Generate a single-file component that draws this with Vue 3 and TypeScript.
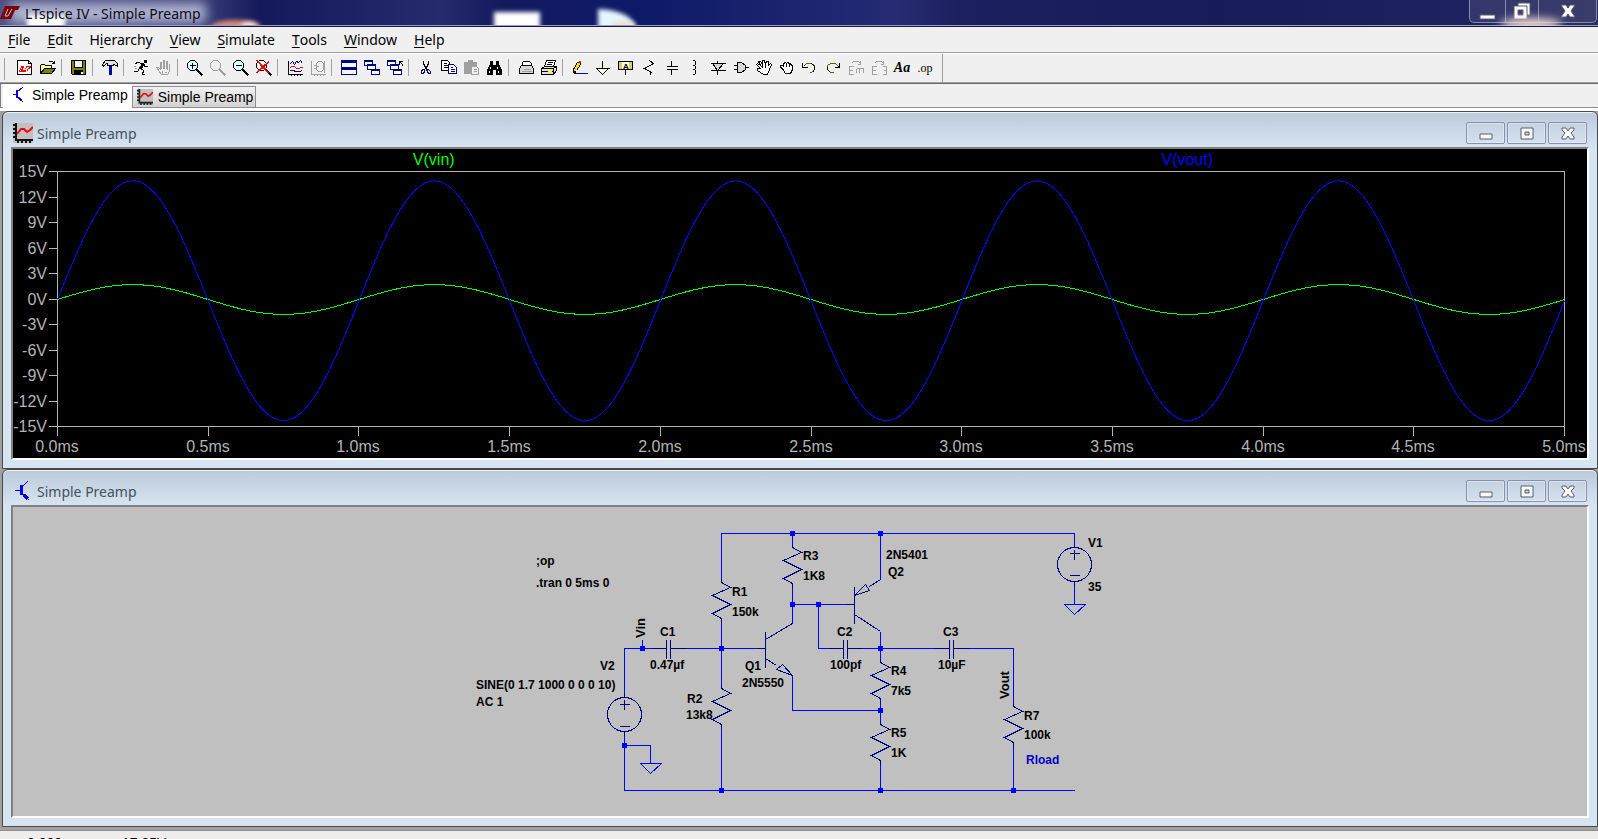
<script setup lang="ts">
import { computed, onBeforeUnmount, onMounted, ref } from 'vue'

interface Part { d: string; fill?: string; stroke?: string; w?: number }
interface Tool { name: string; parts?: Part[]; label?: string; kind?: string }

const NAVY = '#000080'
const GREY = '#a0a0a0'

const menus = ['File', 'Edit', 'Hierarchy', 'View', 'Simulate', 'Tools', 'Window', 'Help'].map((name) => {
  const at = name === 'Hierarchy' ? 1 : 0
  return { name, before: name.slice(0, at), key: name[at], after: name.slice(at + 1) }
})

function lens(stroke: string, fill: string, handle = stroke): Part[] {
  return [
    { d: 'M3 0H7L10 3V7L7 10H3L0 7V3Z', fill, stroke },
    { d: 'M9 9L15 15', stroke: handle, w: 2 },
  ]
}

function miniWindow(x: number, y: number): Part[] {
  return [
    { d: `M${x} ${y}h8v5h-8Z`, fill: '#fff', stroke: NAVY },
    { d: `M${x} ${y + 1}h8`, stroke: NAVY },
  ]
}

const groups: Tool[][] = [
  [
    {
      name: 'New Schematic',
      parts: [
        { d: 'M0 0H11L14 3V14H0Z', fill: '#fff' },
        { d: 'M11 0V3H14' },
        { d: 'M4 6H6L4 10H8V11H2ZM8 6H13L12 8H11L9 11M10 6L7 9', stroke: '#f00' },
      ],
    },
    {
      name: 'Open',
      parts: [
        { d: 'M0 13V5L1 4H4L5 5H11V8H4Z', fill: '#ffff90' },
        { d: 'M0 13L4 8H15L11 13Z', fill: '#808000' },
        { d: 'M8 2L9 1H12L14 3M14 0V3H11' },
      ],
    },
  ],
  [
    {
      name: 'Save',
      parts: [
        { d: 'M0 0H14V14H1L0 13Z', fill: '#808000' },
        { d: 'M3 0H11V7H3Z', fill: '#efefef' },
        { d: 'M3 10H11V14H3Z', fill: '#000' },
        { d: 'M10 11V13', stroke: '#fff', w: 2 },
      ],
    },
  ],
  [
    {
      name: 'Control Panel',
      parts: [
        { d: 'M7 5H9V14H7Z', fill: '#0000d0', stroke: '#0000a0' },
        { d: 'M0 4L3 0H12L15 3V6L12 4H11V5H5V3H4L1 6Z', fill: '#e0e0e0' },
      ],
    },
  ],
  [
    {
      name: 'Run',
      parts: [
        { d: 'M11 0H13V2H11Z', fill: '#000' },
        { d: 'M10 3L7 8', w: 3 },
        { d: 'M9 4L6 2H3L2 4M10 5L12 6H14M7 8L10 10L9 14H11M6 8L4 11H0' },
        { d: 'M1 8H3M0 6H2', stroke: GREY },
      ],
    },
    {
      name: 'Halt',
      parts: [{ d: 'M4 9V2H5V8M7 8V0H8V8M10 8V1H11V9M13 11V4H12M4 9L2 7H0L5 14H11L13 11M6 14V10M8 12H10', stroke: GREY }],
    },
  ],
  [
    { name: 'Zoom to rectangle', parts: [...lens('#000', '#d8ffff'), { d: 'M5 2V8M2 5H8', w: 1 }] },
    { name: 'Pan', parts: lens(GREY, '#efefef') },
    { name: 'Zoom back', parts: [...lens('#000', '#d8ffff'), { d: 'M2 5H8' }] },
    {
      name: 'Zoom full extents',
      parts: [...lens('#000', '#d8ffff'), { d: 'M0 0L12 13M1 0L13 13M13 0L0 12M13 1L1 12', stroke: '#f00' }],
    },
  ],
  [
    {
      name: 'Autorange',
      parts: [
        { d: 'M1 0V14H15M0 2H1M0 5H1M0 8H1M0 11H1M4 14V15M7 14V15M10 14V15M13 14V15' },
        { d: 'M2 4L5 1L7 4L9 1L11 2L13 0L15 3M2 10H6L8 11H12L15 10', stroke: NAVY },
        { d: 'M2 8L4 6H7L9 8H12L13 7H15', stroke: '#f00' },
      ],
    },
    {
      name: 'Plot settings',
      parts: [{ d: 'M1 0V14H15M0 2H1M0 5H1M0 8H1M4 14V15M7 14V15M10 14V15M13 14V15M3 5H5M3 8H5M8 1H11L13 3V9L11 11H8L6 9V3ZM14 0V12M6 6H8', stroke: GREY }],
    },
  ],
  [
    {
      name: 'Tile windows',
      parts: [
        { d: 'M0 0H15V7H0ZM0 7H15V14H0Z', fill: '#f4f4ff', stroke: NAVY },
        { d: 'M0 1H15M0 8H15', stroke: NAVY, w: 2 },
      ],
    },
    { name: 'Cascade windows', parts: [...miniWindow(0, 0), ...miniWindow(3, 4), ...miniWindow(7, 9)] },
    {
      name: 'Close all',
      parts: [...miniWindow(0, 0), ...miniWindow(3, 4), ...miniWindow(6, 9), { d: 'M15 5V4L12 1M12 4V1H15' }],
    },
  ],
  [
    {
      name: 'Cut',
      parts: [
        { d: 'M5 0V3L8 9M10 0V3L7 9' },
        { d: 'M6 9L4 9L3 11V13H5L6 11ZM8 9L10 9L12 11V13H10L9 11Z', stroke: NAVY },
      ],
    },
    {
      name: 'Copy',
      parts: [
        { d: 'M0 0H6L8 2V10H0ZM2 3H5M2 5H6M2 7H6', fill: '#fff' },
        { d: 'M7 4H12L15 7V13H7ZM9 7H11M9 9H13M9 11H13', fill: '#fff', stroke: NAVY },
      ],
    },
    {
      name: 'Paste',
      parts: [
        { d: 'M0 2H4V0H8V2H12V13H0Z', fill: GREY, stroke: GREY },
        { d: 'M7 6H12L14 8V14H7ZM9 9H12M9 11H12', fill: '#efefef', stroke: GREY },
      ],
    },
    {
      name: 'Find',
      parts: [
        { d: 'M3 1H5V4L6 5H8L9 4V1H11V4L13 8L14 10V14H9V9H5V14H0V10L1 8L3 4Z', fill: '#000' },
        { d: 'M3 6V8M2 10V12M10 6V8M11 10V12', stroke: '#fff' },
      ],
    },
  ],
  [
    {
      name: 'Print setup',
      parts: [
        { d: 'M4 5V2L5 1H11L13 3V5', fill: '#fff' },
        { d: 'M3 5H13L15 8V13H1V8Z', fill: '#d8d8d8' },
        { d: 'M3 11H13M5 9H12', stroke: GREY },
      ],
    },
    {
      name: 'Print',
      parts: [
        { d: 'M3 6L5 0H14L12 6', fill: '#fff' },
        { d: 'M6 2H11M5 4H10' },
        { d: 'M0 8L3 6H15V10L12 14H0Z', fill: '#e0e0e0' },
        { d: 'M0 8H12V14M0 11H12M12 8L15 6' },
        { d: 'M6 10H10', stroke: '#ff0', w: 2 },
      ],
    },
  ],
  [
    {
      name: 'Wire',
      parts: [
        { d: 'M1 13H15', stroke: '#0000ff' },
        { d: 'M1 12V9L5 2H8V4L4 10Z', fill: '#ffe000' },
        { d: 'M6 1H8', stroke: '#f00', w: 2 },
        { d: 'M1 10V12H3' },
      ],
    },
    { name: 'Ground', parts: [{ d: 'M7 0V8' }, { d: 'M1 8H13L7 14Z', fill: '#ffffd0', stroke: '#808000' }, { d: 'M0 8H14M2 9L7 14L12 9' }] },
    {
      name: 'Label net',
      kind: 'netlabel',
      parts: [{ d: 'M0 1H14V9H0Z', fill: '#d8d060' }, { d: 'M4 2H10V8H4Z', fill: '#fff', stroke: '#fff' }, { d: 'M0 1H14V9H0ZM7 9V14' }],
    },
    { name: 'Resistor', parts: [{ d: 'M8 0L12 3L3 8L10 12L8 15' }] },
    { name: 'Capacitor', parts: [{ d: 'M7 0V6M7 9V14M2 6H13M2 9H13' }] },
    { name: 'Inductor', parts: [{ d: 'M5 0H7L8 1V4L7 5H5M7 5L8 6V8L7 9H5M7 9L8 10V13L7 14H5' }] },
    { name: 'Diode', parts: [{ d: 'M7 0V3M7 10V14M0 3H15M0 10H15' }, { d: 'M2 3H13L7 10Z', fill: '#d8d8d8' }] },
    { name: 'Component', parts: [{ d: 'M4 2H8L12 5V9L8 12H4Z', fill: '#d8d8d8' }, { d: 'M0 5H4M0 9H4M12 7H15' }] },
    {
      name: 'Move',
      parts: [
        { d: 'M4 8L0 4L1 3L4 5L2 1H4L6 4V0H8L9 4L10 1H12V5L14 3L15 4L13 9L11 14H7L1 10V8Z', fill: '#fff' },
        { d: 'M6 4V7M9 4V7' },
      ],
    },
    {
      name: 'Drag',
      parts: [
        { d: 'M3 8L1 7V5H3L4 6V3L6 2L7 3L8 2L10 3L12 4L13 6V9L11 13H6L4 10Z', fill: '#fff' },
        { d: 'M7 3V6M10 3V6' },
      ],
    },
    { name: 'Undo', parts: [{ d: 'M1 6L4 3H9L12 5V9L9 12H7', stroke: '#606000' }, { d: 'M0 2V7H5M1 5H2M9 3L12 6V9L10 12' }] },
    { name: 'Redo', parts: [{ d: 'M13 6L10 3H5L2 5V9L5 12H8', stroke: '#606000' }, { d: 'M14 2V7H9M12 6H13M2 9V6M3 10L5 12' }] },
    {
      name: 'Rotate',
      parts: [
        { d: 'M5 6H1V14H5M1 10H4M8 8H15M8 8V12M11 8V12M15 8V12', stroke: GREY },
        { d: 'M3 3L5 1H10L12 3M12 0V4H9', stroke: GREY },
      ],
    },
    {
      name: 'Mirror',
      parts: [
        { d: 'M5 6H1V14H5M1 10H4M11 6H15V14H11M15 10H12', stroke: GREY },
        { d: 'M3 3L5 1H10L12 3M12 0V4H9', stroke: GREY },
      ],
    },
    { name: 'Text', label: 'Aa', kind: 'serif-bold' },
    { name: 'SPICE directive', label: '.op', kind: 'serif' },
  ],
]

/* Waveform plot */
const plotHost = ref<HTMLElement | null>(null)
const plotWidth = ref(1574)
const left = 44
const top = 22
const bottom = 277
const middle = 150
const right = computed(() => plotWidth.value - 23)
const span = computed(() => right.value - left)

const yTicks = Array.from({ length: 11 }, (_, i) => ({
  label: `${15 - 3 * i}V`,
  y: Math.round(top + ((bottom - top) * i) / 10),
}))
const xTicks = computed(() =>
  Array.from({ length: 11 }, (_, i) => ({
    label: `${(i / 2).toFixed(1)}ms`,
    x: Math.round(left + (span.value * i) / 10),
  })),
)

function trace(volts: (ms: number) => number): string {
  const points: string[] = []
  const count = 500
  for (let i = 0; i <= count; i++) {
    const ms = (5 * i) / count
    const x = left + (span.value * ms) / 5
    const y = middle - (volts(ms) * (bottom - top)) / 30
    points.push(`${x.toFixed(1)},${y.toFixed(1)}`)
  }
  return points.join(' ')
}
const vin = computed(() => trace((t) => 1.75 * Math.sin(2 * Math.PI * t)))
const vout = computed(() => trace((t) => 14.1 * Math.sin(2 * Math.PI * t) - 0.15 * (1 - Math.exp(-t * 8))))

let observer: ResizeObserver | undefined
onMounted(() => {
  const host = plotHost.value
  if (!host) return
  observer = new ResizeObserver(() => { plotWidth.value = host.clientWidth })
  observer.observe(host)
})
onBeforeUnmount(() => observer?.disconnect())

/* Schematic */
const wires = [
  'M708 72V26H1061V36', 'M708 115V177', 'M708 221V283', 'M779 26V36', 'M779 80V116', 'M867 26V72',
  'M779 97H833', 'M805 97V141H815', 'M849 141H921', 'M955 141H1000V195', 'M1000 238V283',
  'M867 124V151', 'M867 195V213', 'M867 257V283', 'M779 168V203H867', 'M673 141H744',
  'M611 186V141H638', 'M629 141V132', 'M611 228V283H1061', 'M611 238H637V256', 'M1061 78V97',
  'M627 256H648L637 266Z', 'M1051 97H1072L1061 107Z',
].join('')

const resistors = [
  { x: 708, y: 75 }, { x: 708, y: 181 }, { x: 779, y: 40 },
  { x: 867, y: 155 }, { x: 867, y: 217 }, { x: 1000, y: 199 },
].map(({ x, y }) => `M${x} ${y - 4}v4l9 5l-18 8l18 9l-18 9l9 5v4`).join('')

const symbols = [
  resistors,
  'M638 141H653M653 132V151M657 132V151M657 141H673',
  'M815 141H830M830 132V151M834 132V151M834 141H849',
  'M921 141H936M936 132V151M940 132V151M940 141H955',
  'M744 141H752M752 124V160M752 132L779 116M752 151L763 158M779 168L769 157L763 162Z',
  'M833 97H841M841 79V116M856 79L867 72M841 107L867 124M841 88L852 77L856 83Z',
  'M611 186V190M611 224V228M606 197H616M611 192V202M606 219H616',
  'M1061 36V40M1061 74V78M1056 46H1066M1061 42V52M1056 68H1066',
].join('')

const nodes = [
  [779, 26], [867, 26], [779, 97], [805, 97], [629, 141], [708, 141], [867, 141],
  [867, 203], [611, 238], [708, 283], [867, 283], [1000, 283],
]

const notes: [number, number, string][] = [
  [523, 58, ';op'], [523, 80, '.tran 0 5ms 0'], [463, 182, 'SINE(0 1.7 1000 0 0 0 10)'], [463, 199, 'AC 1'],
  [587, 163, 'V2'], [647, 129, 'C1'], [637, 162, '0.47µf'], [719, 89, 'R1'], [719, 109, '150k'],
  [674, 196, 'R2'], [673, 212, '13k8'], [732, 163, 'Q1'], [729, 180, '2N5550'], [790, 53, 'R3'],
  [790, 73, '1K8'], [873, 52, '2N5401'], [875, 69, 'Q2'], [824, 129, 'C2'], [817, 162, '100pf'],
  [878, 168, 'R4'], [878, 188, '7k5'], [878, 230, 'R5'], [878, 250, '1K'], [930, 129, 'C3'],
  [925, 162, '10µF'], [1011, 213, 'R7'], [1011, 232, '100k'], [1075, 40, 'V1'], [1075, 84, '35'],
]

const frameButtons = [
  { name: 'Minimize', d: 'M13 11H25V16H13Z', hole: '' },
  { name: 'Maximize', d: 'M13 5H25V16H13Z', hole: 'M17 9H21V12H17Z' },
  { name: 'Close', d: 'M13 5H17L19 8L21 5H25V7L22 10L25 14V16H21L19 13L17 16H13V14L16 10L13 7Z', hole: '' },
]
</script>

<template>
  <main class="app">
    <header class="titlebar">
      <svg class="wallpaper" width="1598" height="25" aria-hidden="true">
        <defs>
          <filter id="soft" x="-20%" y="-80%" width="140%" height="260%"><feGaussianBlur stdDeviation="2" /></filter>
          <filter id="glow" x="-20%" y="-80%" width="140%" height="260%"><feGaussianBlur stdDeviation="6" /></filter>
        </defs>
        <rect x="10" y="3" width="196" height="20" fill="#c4c8e0" opacity=".85" filter="url(#glow)" />
        <rect x="27" y="15" width="38" height="16" fill="#fff" filter="url(#soft)" />
        <ellipse cx="236" cy="27" rx="25" ry="7" fill="#d88878" filter="url(#soft)" />
        <ellipse cx="249" cy="26" rx="8" ry="4" fill="#f4e4e0" filter="url(#soft)" />
        <rect x="494" y="12" width="46" height="18" fill="#fff" filter="url(#soft)" />
        <path d="M598 9Q632 10 637 30H598Z" fill="#e4f6ff" filter="url(#soft)" />
        <ellipse cx="623" cy="25" rx="12" ry="4" fill="#f4e0c8" filter="url(#soft)" />
      </svg>
      <svg class="logo" width="20" height="14" aria-hidden="true">
        <path d="M5 0H20L18 4H15L11 13H0Z" fill="#7c0008" />
        <path d="M8 3L5 10H8L12 3" fill="none" stroke="#c8c4d4" />
      </svg>
      <h1>LTspice IV - Simple Preamp</h1>
      <div class="app-buttons">
        <button type="button" class="min" aria-label="Minimize window">
          <svg width="18" height="18"><path d="M1 13H16V17H1Z" fill="#fff" stroke="#555a70" /></svg>
        </button>
        <button type="button" class="restore" aria-label="Restore window">
          <svg width="18" height="18">
            <path d="M5 1H17V13H5Z" fill="#fff" stroke="#555a70" />
            <path d="M1 4H14V17H1Z" fill="#fff" stroke="#555a70" />
            <path d="M5 8H10V13H5Z" fill="#34366a" stroke="#555a70" />
          </svg>
        </button>
        <button type="button" class="close" aria-label="Close window">
          <svg width="18" height="18"><path d="M2 3H7L9 6L11 3H16L12 9L16 15H11L9 12L7 15H2L6 9Z" fill="#fff" stroke="#555a70" /></svg>
        </button>
      </div>
    </header>

    <nav class="menubar" aria-label="Main menu">
      <button v-for="m in menus" :key="m.name" type="button">{{ m.before }}<u>{{ m.key }}</u>{{ m.after }}</button>
    </nav>

    <div class="toolbar" role="toolbar" aria-label="Tools">
      <div v-for="(group, g) in groups" :key="g" class="group">
        <button v-for="tool in group" :key="tool.name" type="button" :aria-label="tool.name" :title="tool.name">
          <span v-if="tool.label" :class="tool.kind">{{ tool.label }}</span>
          <svg v-else width="16" height="16" viewBox="0 0 16 16" aria-hidden="true">
            <g transform="translate(0.5 0.5)" shape-rendering="crispEdges">
              <path
                v-for="(p, i) in tool.parts"
                :key="i"
                :d="p.d"
                :fill="p.fill ?? 'none'"
                :stroke="p.stroke ?? '#000'"
                :stroke-width="p.w ?? 1"
              />
            </g>
            <text v-if="tool.kind === 'netlabel'" class="net" x="8" y="9" text-anchor="middle">A</text>
          </svg>
        </button>
      </div>
    </div>

    <div class="tabs" role="tablist">
      <button type="button" role="tab" class="tab active" aria-selected="true">
        <svg width="16" height="18" viewBox="0 0 16 18" shape-rendering="crispEdges" aria-hidden="true">
          <path d="M2 8H5M5 4V12M6 6L12 1M6 10L12 16" fill="none" stroke="#0000d0" stroke-width="1" />
          <path d="M6 4V12M8 12L11 15" stroke="#0000d0" stroke-width="2" />
        </svg>
        Simple Preamp
      </button>
      <button type="button" role="tab" class="tab" aria-selected="false">
        <svg width="16" height="16" viewBox="0 0 20 20" aria-hidden="true">
          <rect width="20" height="20" fill="#c0c0c0" />
          <path d="M3 0V17H20M0 2H3M0 6H3M0 10H3M0 14H3M5 17V20M9 17V20M13 17V20M17 17V20" fill="none" stroke="#222" stroke-width="2" />
          <path d="M4 11L8 6H11L14 9L17 7L20 4" fill="none" stroke="#f00010" stroke-width="2" />
        </svg>
        Simple Preamp
      </button>
    </div>

    <div class="workspace">
      <section class="window" aria-label="Waveform">
        <header class="caption">
          <svg width="20" height="20" viewBox="0 0 20 20" aria-hidden="true">
            <rect width="20" height="20" fill="#c0c0c0" />
            <path d="M3 0V17H20M0 2H3M0 6H3M0 10H3M0 14H3M5 17V20M9 17V20M13 17V20M17 17V20" fill="none" stroke="#111" stroke-width="2" />
            <path d="M4 11L8 6H11L14 9L17 7L20 4" fill="none" stroke="#f00010" stroke-width="2" />
          </svg>
          <h2>Simple Preamp</h2>
          <div class="frame-buttons">
            <button v-for="b in frameButtons" :key="b.name" type="button" :aria-label="b.name">
              <svg width="37" height="20"><path :d="b.d" /><path v-if="b.hole" class="hole" :d="b.hole" /></svg>
            </button>
          </div>
        </header>
        <div ref="plotHost" class="pane plot">
          <svg :width="plotWidth" height="309" role="img" aria-label="V(vin) and V(vout) over 5 ms">
            <text class="vin" :x="left + span / 4" y="16" text-anchor="middle">V(vin)</text>
            <text class="vout" :x="left + (span * 3) / 4" y="16" text-anchor="middle">V(vout)</text>
            <g class="axes">
              <text v-for="t in yTicks" :key="t.label" x="34" :y="t.y + 6" text-anchor="end">{{ t.label }}</text>
              <text v-for="t in xTicks" :key="t.label" :x="t.x" y="303" text-anchor="middle">{{ t.label }}</text>
              <g transform="translate(0.5 0.5)" shape-rendering="crispEdges">
                <rect :x="left" :y="top" :width="span" :height="bottom - top" />
                <line v-for="t in yTicks" :key="t.label" x1="35" :x2="left" :y1="t.y" :y2="t.y" />
                <line v-for="t in xTicks" :key="t.label" :x1="t.x" :x2="t.x" :y1="bottom" y2="286" />
              </g>
            </g>
            <g class="traces" transform="translate(0.5 0.5)" shape-rendering="crispEdges">
              <polyline :points="vin" stroke="#00ff00" />
              <polyline :points="vout" stroke="#0000ff" />
            </g>
          </svg>
        </div>
      </section>

      <section class="window" aria-label="Schematic">
        <header class="caption">
          <svg width="20" height="20" viewBox="0 0 20 20" shape-rendering="crispEdges" aria-hidden="true">
            <path d="M2 9H7M9 6L15 0M9 12L16 19" fill="none" stroke="#0000d0" />
            <path d="M8 4V14" stroke="#0000ff" stroke-width="3" />
            <path d="M11 14L15 18" stroke="#0000d0" stroke-width="3" />
          </svg>
          <h2>Simple Preamp</h2>
          <div class="frame-buttons">
            <button v-for="b in frameButtons" :key="b.name" type="button" :aria-label="b.name">
              <svg width="37" height="20"><path :d="b.d" /><path v-if="b.hole" class="hole" :d="b.hole" /></svg>
            </button>
          </div>
        </header>
        <div class="pane schematic">
          <svg width="100%" height="309" viewBox="0 0 1574 309" role="img" aria-label="Preamplifier schematic">
            <g transform="translate(0.5 0.5)" shape-rendering="crispEdges" fill="none">
              <path :d="wires" stroke="#0000ff" />
              <path :d="symbols" stroke="#000080" />
              <circle cx="611" cy="207" r="17" stroke="#000080" />
              <circle cx="1061" cy="57" r="17" stroke="#000080" />
            </g>
            <rect v-for="([x, y], i) in nodes" :key="i" :x="x - 2" :y="y - 2" width="5" height="5" fill="#0000ff" />
            <text v-for="([x, y, s], i) in notes" :key="i" :x="x" :y="y">{{ s }}</text>
            <text x="1013" y="257" class="comment">Rload</text>
            <text class="netname" transform="translate(632 131) rotate(-90)">Vin</text>
            <text class="netname" transform="translate(996 192) rotate(-90)">Vout</text>
          </svg>
        </div>
      </section>
    </div>

    <footer class="status"><span>0.000</span><span>17.35V</span></footer>
  </main>
</template>

<style>
html,
body {
  margin: 0;
  overflow: hidden;
}
</style>

<style scoped>
.app {
  height: 100vh;
  overflow: hidden;
  display: flex;
  flex-direction: column;
  background: #f0f0f0;
  color: #000;
  font-family: "Noto Sans", "Open Sans", sans-serif;
}
.app > * {
  flex: none;
}
button {
  border: 0;
  padding: 0;
  margin: 0;
  background: none;
  color: inherit;
  font: inherit;
  display: flex;
  align-items: center;
}
h1,
h2 {
  margin: 0;
  font-size: 14px;
  font-weight: 400;
}
svg {
  display: block;
  flex: none;
}

.titlebar {
  position: relative;
  box-sizing: border-box;
  height: 27px;
  display: flex;
  align-items: flex-start;
  border-bottom: 1px solid #1a1a40;
  box-shadow: inset 0 -1px #9a9cc0;
  overflow: hidden;
  background: linear-gradient(90deg, #4c5080 0, #3b3f78 200px, #14195c 260px, #262b70 440px, #141a5e 500px, #0d1a68 640px, #262b72 900px, #1c2060 960px, #171b58 76%, #1e2360 92%, #2b2d60 100%);
}
.wallpaper {
  position: absolute;
  left: 0;
  top: 0;
}
.logo {
  position: relative;
  margin-top: 6px;
}
.titlebar h1 {
  position: relative;
  margin-left: 5px;
  line-height: 27px;
  color: #0c0c18;
}
.app-buttons {
  position: relative;
  display: flex;
  margin-left: auto;
  margin-right: 1px;
  height: 22px;
  border: 1px solid #8688ac;
  border-top: 0;
  border-radius: 0 0 5px 5px;
  background: rgba(90, 92, 130, 0.35);
}
.app-buttons::after {
  content: "";
  position: absolute;
  left: 30px;
  bottom: -8px;
  width: 62px;
  height: 12px;
  border-radius: 50%;
  background: #f0dcd8;
  filter: blur(4px);
}
.app-buttons button {
  justify-content: center;
  width: 33px;
}
.app-buttons button + button {
  border-left: 1px solid #8688ac;
}
.app-buttons .min {
  width: 35px;
}
.app-buttons .close {
  width: 58px;
}

.menubar {
  display: flex;
  gap: 1px;
  height: 25px;
  font-size: 14px;
  line-height: 25px;
  border-bottom: 1px solid #a0a0a0;
}
.menubar button {
  padding: 0 8px;
  line-height: 25px;
}
.menubar u {
  text-underline-offset: 2px;
}

.toolbar {
  display: flex;
  align-items: flex-start;
  box-sizing: border-box;
  height: 31px;
  padding: 2px 0 0 13px;
  border-top: 1px solid #fff;
  border-bottom: 1px solid #696969;
  box-shadow: inset 0 -1px #a0a0a0;
  background:
    linear-gradient(#a0a0a0, #a0a0a0) 4px 4px / 1px 22px no-repeat,
    linear-gradient(#a0a0a0, #a0a0a0) 942px 0 / 1px 29px no-repeat,
    #f0f0f0;
}
.group {
  display: flex;
}
.group + .group {
  padding-left: 8px;
  background: linear-gradient(#a0a0a0, #a0a0a0) 2px 3px / 1px 17px no-repeat;
}
.group button {
  box-sizing: border-box;
  width: 23px;
  height: 24px;
  padding-left: 1px;
  justify-content: center;
  white-space: nowrap;
}
.serif-bold {
  font: italic bold 14px "Liberation Serif", serif;
}
.serif {
  font: 12px "Liberation Serif", serif;
}
.net {
  font: bold 8px "Liberation Sans", sans-serif;
}

.tabs {
  display: flex;
  align-items: flex-end;
  box-sizing: border-box;
  height: 24px;
  padding-left: 2px;
  border-left: 1px solid #808080;
  box-shadow: inset 0 -1px #8c8e94;
  font: 14px/18px "Liberation Sans", Arial, sans-serif;
}
.tab {
  box-sizing: border-box;
  height: 22px;
  gap: 5px;
  padding: 0 2px 0 4px;
  border: 1px solid #8c8e94;
  background: linear-gradient(#f2f2f2, #d2d2d2);
}
.tab.active {
  height: 24px;
  gap: 5px;
  padding: 0 4px 2px 8px;
  border: 0;
  background: #fff;
}

.workspace {
  padding: 3px 0 3px 2px;
  background: linear-gradient(#fff 0, #fff 3px, #a0a0a0 3px);
}
.window {
  padding: 0 8px 8px;
  border: 1px solid #484848;
  border-radius: 6px 6px 0 0;
  background: linear-gradient(#bccad9 0, #d7e4f2 36px);
  box-shadow: inset 0 1px #eef3f8;
}
.caption {
  display: flex;
  align-items: center;
  height: 35px;
  padding: 7px 2px 0;
  box-sizing: border-box;
}
.caption h2 {
  margin-left: 4px;
  color: #47505c;
}
.frame-buttons {
  display: flex;
  gap: 2px;
  margin-left: auto;
}
.frame-buttons button {
  border: 1px solid #8592b0;
  border-radius: 2px;
  box-shadow: inset 0 0 0 1px rgba(255, 255, 255, 0.35);
}
.frame-buttons path {
  fill: #fafafa;
  stroke: #555f6e;
}
.frame-buttons path.hole {
  fill: #c5d3e2;
}
.pane {
  border: 2px solid;
  border-color: #808080 #fff #fff #808080;
  overflow: hidden;
}
.plot {
  background: #000;
  font: 16px "Liberation Sans", Arial, sans-serif;
}
.axes text {
  fill: #b4b4b4;
}
.axes line,
.axes rect {
  fill: none;
  stroke: #b4b4b4;
}
.vin {
  fill: #00ff00;
}
.vout {
  fill: #0000ff;
}
.traces {
  fill: none;
}
.schematic {
  background: #c0c0c0;
  font: bold 12px "Liberation Sans", Arial, sans-serif;
}
.schematic .comment {
  fill: #0000c8;
}
.schematic .netname {
  font-size: 13px;
}

.status {
  display: flex;
  gap: 60px;
  padding: 3px 27px 0;
  border-top: 1px solid #909090;
  background: #f0ecec;
  font: 14px/18px "Liberation Sans", Arial, sans-serif;
}
</style>
